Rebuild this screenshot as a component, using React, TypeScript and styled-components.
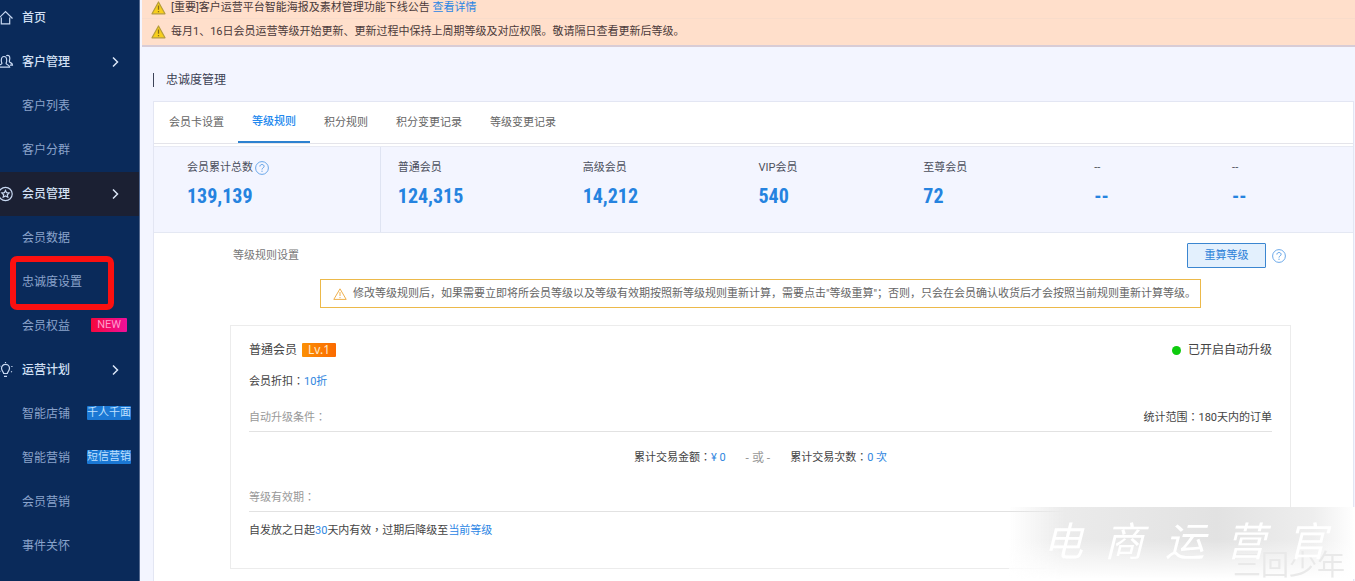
import React from "react";
import styled, { createGlobalStyle, css } from "styled-components";

const Global = createGlobalStyle`
  *, *::before, *::after { box-sizing: border-box; }
  body {
    margin: 0;
    background: #f3f5ff;
    color: #444;
    font: 11px/16px Roboto, "Noto Sans CJK SC", sans-serif;
    overflow: hidden;
  }
  a { color: #2b85e4; text-decoration: none; }
  h1, h2, h3, p, dl, dd, ul { margin: 0; padding: 0; font-weight: 400; }
  button { font: inherit; cursor: pointer; }
`;

const Page = styled.div`
  display: grid;
  grid-template-columns: 140px minmax(0, 1fr);
  height: 100vh;
`;

const Sidebar = styled.nav`
  background: #0a2a5a;
  border-right: 1px solid #54698f;
  overflow: hidden;
`;

const Menu = styled.ul`
  list-style: none;
  margin-top: -4px;
`;

const MenuItem = styled.li<{ $current?: boolean }>`
  position: relative;
  height: 44px;
  background: ${(p) => (p.$current ? "#1b2033" : "transparent")};
`;

const MenuLink = styled.a<{ $top?: boolean }>`
  display: grid;
  grid-template-columns: 22px 1fr auto;
  align-items: center;
  height: 100%;
  padding-right: 8px;
  font-size: 12px;
  color: ${(p) => (p.$top ? "#d3e0f5" : "#8aa3cb")};
  font-weight: ${(p) => (p.$top ? 500 : 400)};
  svg { display: block; }
`;

const Chevron = styled.svg`
  margin-right: 10px;
`;

const Tag = styled.span<{ $tone: "new" | "blue" }>`
  height: 14px;
  line-height: 14px;
  margin-bottom: 2px;
  font-size: 11px;
  border-radius: 1px;
  ${(p) =>
    p.$tone === "new"
      ? css`
          padding: 0 6px;
          margin-right: 4px;
          color: #ff9ccb;
          background: linear-gradient(90deg, #f5083c, #f0109b);
        `
      : css`
          color: #bfe0ff;
          background: #1b78d4;
        `}
`;

const Highlight = styled.span`
  position: absolute;
  left: 10px;
  top: -4px;
  width: 104px;
  height: 54px;
  border: 6px solid #fb1010;
  border-radius: 7px;
  pointer-events: none;
`;

const Main = styled.main`
  display: flex;
  flex-direction: column;
  min-width: 0;
  overflow: hidden;
`;

const Notices = styled.div`
  margin-left: 2px;
  height: 47px;
  background: #ffdfcb;
  border-bottom: 2px solid #d8ccd6;
  color: #4b3a3a;
`;

const Notice = styled.p`
  display: flex;
  align-items: center;
  gap: 5px;
  height: 26px;
  padding-left: 9px;
  &:first-child { height: 19px; padding-bottom: 2px; border-bottom: 1px solid #f8dccb; }
`;

const Title = styled.h1`
  margin: 26px 0 14px 13px;
  padding-left: 12px;
  border-left: 1px solid #3c4358;
  height: 14px;
  line-height: 14px;
  font-size: 12px;
  color: #3b4154;
`;

const Panel = styled.section`
  flex: 1;
  min-height: 0;
  margin: 0 1px 0 13px;
  background: #fff;
  border: 1px solid #e3e6f3;
  border-bottom: 0;
`;

const Tabs = styled.div`
  display: flex;
  height: 42px;
  padding-left: 1px;
  border-bottom: 1px solid #e4e4ea;
`;

const Tab = styled.button`
  padding: 0 14px;
  border: 0;
  background: none;
  color: #666;
  &[aria-selected="true"] {
    color: #2288ee;
    font-weight: 500;
    border-bottom: 2px solid #2d82d0;
  }
`;

const Stats = styled.dl`
  display: grid;
  grid-template-columns: 227fr 185fr 176fr 165fr 171fr 138fr 138fr;
  height: 87px;
  margin-top: 2px;
  background: #f3f5ff;
  border-top: 1px solid #e8eaf3;
  border-bottom: 1px solid #e4e8f3;
`;

const Stat = styled.div<{ $first?: boolean }>`
  padding: 13px 0 0 ${(p) => (p.$first ? 33 : 17)}px;
  border-right: ${(p) => (p.$first ? "1px solid #dfe4f2" : "0")};
  dt {
    display: flex;
    align-items: center;
    gap: 2px;
    height: 16px;
    color: #4b4f5c;
  }
  dd {
    margin-top: 8px;
    font: 700 20px/24px "Roboto Condensed", "Liberation Sans Narrow", sans-serif;
    color: #2583df;
  }
`;

const Content = styled.div`
  padding: 10px 62px 12px 76px;
`;

const RuleHead = styled.div`
  display: flex;
  justify-content: space-between;
  align-items: center;
  padding: 0 5px 0 3px;
  h2 { font-size: 11px; color: #777; }
`;

const Actions = styled.div`
  display: flex;
  align-items: center;
  gap: 6px;
`;

const Recalc = styled.button`
  width: 79px;
  height: 25px;
  padding: 0;
  border: 1px solid #3b86d0;
  border-radius: 1px;
  background: #e3f0fd;
  color: #2b7fd8;
`;

const Alert = styled.p`
  display: flex;
  align-items: center;
  gap: 6px;
  width: fit-content;
  height: 29px;
  margin: 11px auto 17px;
  padding: 0 4px 0 12px;
  border: 1px solid #ecb94a;
  white-space: nowrap;
  color: #666;
`;

const Card = styled.article`
  height: 244px;
  padding: 16px 18px;
  border: 1px solid #ececec;
  font-family: Roboto, "Noto Sans CJK TC", sans-serif;
`;

const Row = styled.div`
  display: flex;
  justify-content: space-between;
  align-items: center;
`;

const LevelName = styled.h3`
  display: flex;
  align-items: center;
  gap: 5px;
  font-size: 12px;
  color: #444;
`;

const Badge = styled.span`
  width: 34px;
  height: 14px;
  border-radius: 1px;
  background: linear-gradient(90deg, #fb8f05, #fb6a00);
  color: #ffe9c9;
  font: 12px/14px "Noto Sans", sans-serif;
  text-align: center;
`;

const Status = styled.span`
  display: flex;
  align-items: center;
  gap: 7px;
  font-size: 12px;
  &::before {
    content: "";
    width: 9px;
    height: 9px;
    border-radius: 50%;
    background: #0ecb0e;
  }
`;

const Discount = styled.p`
  margin: 16px 0 18px;
`;

const Blue = styled.span`
  color: #2f86e0;
`;

const SectionHead = styled(Row)`
  height: 24px;
  border-bottom: 1px solid #e2e2e2;
  padding-bottom: 3px;
  h3 { font-size: 11px; color: #999; }
`;

const Conditions = styled.p`
  display: flex;
  justify-content: center;
  gap: 20px;
  padding: 18px 0 22px;
`;

const Or = styled.span`
  color: #999;
  font-size: 12px;
`;

const Validity = styled.p`
  margin-top: 11px;
`;

const Watermark = styled.div`
  position: fixed;
  right: 0;
  bottom: 2px;
  width: 346px;
  height: 72px;
  background: linear-gradient(180deg, #fff0 45%, #fff),
    linear-gradient(90deg, #fff0, #ebebeb 16%, #e2e2e2 60%, #eee 88%, #fff);
  pointer-events: none;
`;

const Brush = styled.div`
  position: relative;
  display: flex;
  gap: 21px;
  padding: 8px 0 0 34px;
  color: #fff;
  font: italic 400 40px/48px "Noto Sans CJK SC", sans-serif;
`;

const Faint = styled.span`
  position: absolute;
  right: 10px;
  bottom: 2px;
  font: 28px/28px "Noto Sans CJK SC", sans-serif;
  color: #e9e9e9;
`;

const Help = () => (
  <svg width="14" height="14" viewBox="0 0 14 14" fill="none" stroke="#5b9fe6" aria-label="帮助">
    <circle cx="7" cy="7" r="6.4" strokeWidth=".9" />
    <path d="M4.9 5.5c0-1.2.9-2 2.1-2s2.1.8 2.1 1.9c0 1.4-2.1 1.6-2.1 3.1M7 9.7v1.2" />
  </svg>
);

const Caution = () => (
  <svg width="15" height="14" viewBox="0 0 15 14" aria-hidden="true">
    <path d="M7.5 1 14 12.8H1z" fill="#f7cf1c" stroke="#b59c3c" strokeWidth="1.2" strokeLinejoin="round" />
    <path d="M7.5 4.5v4.2M7.5 9.9v1.4" stroke="#8a6d14" strokeWidth="1.3" />
  </svg>
);

const icons: Record<string, React.ReactNode> = {
  home: <path d="M-1.5 8.5 5.5 1.5l7 7M1.3 7.5v6.3h8.4V7.5" />,
  users: (
    <>
      <path d="M1.3 6.4C1.3 3.6 2.5 2.5 4 2.5s2.7 1.1 2.7 3.9c0 1.7-.6 2.3-.6 3.2 0 1 3.6.8 3.6 3.6H-2c0-2.8 3.9-2.5 3.9-3.6 0-.9-.6-1.5-.6-3.2z" />
      <path d="M6.200 1.700C8.700.6 9.800 2 9.800 4.200c0 2.100-.9 2.800-.3 3.700.7.9 3 .9 3 3.300H10" />
    </>
  ),
  star: (
    <>
      <circle cx="5.5" cy="8" r="6.7" />
      <path d="m5.5 4.4 1.1 2.3 2.5.3-1.8 1.7.5 2.5-2.3-1.2-2.3 1.2.5-2.5L1.9 7l2.5-.3z" />
    </>
  ),
  bulb: (
    <path d="M3.7 11.5C3.7 9.8 1.5 9 1.5 6.3a4 4 0 0 1 8 0c0 2.7-2.2 3.5-2.2 5.2zM4 14.3h3M5.500 0v1M11.3 4.5h1.2M11 9.5l1 .6M-.5 9.5l.8-.5M-.5 4l.8.5" />
  ),
};

const MenuIcon = ({ name }: { name: string }) => (
  <svg width="14" height="16" viewBox="0 0 14 16" fill="none" stroke="#c9d9f2" strokeWidth="1.2" aria-hidden="true">
    {icons[name]}
  </svg>
);

type Item = {
  label: string;
  icon?: string;
  open?: boolean;
  current?: boolean;
  marked?: boolean;
  tag?: string;
  isNew?: boolean;
};

const items: Item[] = [
  { label: "首页", icon: "home" },
  { label: "客户管理", icon: "users", open: true },
  { label: "客户列表" },
  { label: "客户分群" },
  { label: "会员管理", icon: "star", open: true, current: true },
  { label: "会员数据" },
  { label: "忠诚度设置", marked: true },
  { label: "会员权益", tag: "NEW", isNew: true },
  { label: "运营计划", icon: "bulb", open: true },
  { label: "智能店铺", tag: "千人千面" },
  { label: "智能营销", tag: "短信营销" },
  { label: "会员营销" },
  { label: "事件关怀" },
];

const tabs = ["会员卡设置", "等级规则", "积分规则", "积分变更记录", "等级变更记录"];

const stats = [
  ["会员累计总数", "139,139"],
  ["普通会员", "124,315"],
  ["高级会员", "14,212"],
  ["VIP会员", "540"],
  ["至尊会员", "72"],
  ["--", "--"],
  ["--", "--"],
];

export default function App() {
  return (
    <Page>
      <Global />
      <Sidebar>
        <Menu>
          {items.map((it) => (
            <MenuItem key={it.label} $current={it.current}>
              <MenuLink href="#" $top={!!it.icon}>
                <span>{it.icon && <MenuIcon name={it.icon} />}</span>
                <span>{it.label}</span>
                {it.open && (
                  <Chevron width="12" height="12" viewBox="0 0 12 12" fill="none" stroke="#dbe6f7" strokeWidth="1.5">
                    <path d="m4 1.5 4.5 4.5L4 10.5" />
                  </Chevron>
                )}
                {it.tag && <Tag $tone={it.isNew ? "new" : "blue"}>{it.tag}</Tag>}
              </MenuLink>
              {it.marked && <Highlight />}
            </MenuItem>
          ))}
        </Menu>
      </Sidebar>
      <Main>
        <Notices>
          <Notice>
            <Caution />
            <span>
              [重要]客户运营平台智能海报及素材管理功能下线公告 <a href="#">查看详情</a>
            </span>
          </Notice>
          <Notice>
            <Caution />
            <span>每月1、16日会员运营等级开始更新、更新过程中保持上周期等级及对应权限。敬请隔日查看更新后等级。</span>
          </Notice>
        </Notices>
        <Title>忠诚度管理</Title>
        <Panel>
          <Tabs role="tablist">
            {tabs.map((t, i) => (
              <Tab key={t} role="tab" aria-selected={i === 1}>
                {t}
              </Tab>
            ))}
          </Tabs>
          <Stats>
            {stats.map(([name, value], i) => (
              <Stat key={i} $first={i === 0}>
                <dt>
                  {name}
                  {i === 0 && <Help />}
                </dt>
                <dd>{value}</dd>
              </Stat>
            ))}
          </Stats>
          <Content>
            <RuleHead>
              <h2>等级规则设置</h2>
              <Actions>
                <Recalc>重算等级</Recalc>
                <Help />
              </Actions>
            </RuleHead>
            <Alert>
              <svg width="14" height="12" viewBox="0 0 14 12" fill="none" stroke="#efb04c" aria-hidden="true">
                <path d="M7 .8 13.2 11.4H.8zM7 4v4M7 9v1.2" />
              </svg>
              修改等级规则后，如果需要立即将所会员等级以及等级有效期按照新等级规则重新计算，需要点击"等级重算"；否则，只会在会员确认收货后才会按照当前规则重新计算等级。
            </Alert>
            <Card>
              <Row>
                <LevelName>
                  普通会员 <Badge>Lv.1</Badge>
                </LevelName>
                <Status>已开启自动升级</Status>
              </Row>
              <Discount>
                会员折扣：<Blue>10折</Blue>
              </Discount>
              <SectionHead>
                <h3>自动升级条件：</h3>
                <span>统计范围：180天内的订单</span>
              </SectionHead>
              <Conditions>
                <span>
                  累计交易金额：<Blue>¥ 0</Blue>
                </span>
                <Or>- 或 -</Or>
                <span>
                  累计交易次数：<Blue>0 次</Blue>
                </span>
              </Conditions>
              <SectionHead>
                <h3>等级有效期：</h3>
              </SectionHead>
              <Validity>
                自发放之日起<Blue>30</Blue>天内有效，过期后降级至<a href="#">当前等级</a>
              </Validity>
            </Card>
          </Content>
        </Panel>
      </Main>
      <Watermark>
        <Faint>三回少年</Faint>
        <Brush>
          {[..."电商运营官"].map((c) => (
            <span key={c}>{c}</span>
          ))}
        </Brush>
      </Watermark>
    </Page>
  );
}
